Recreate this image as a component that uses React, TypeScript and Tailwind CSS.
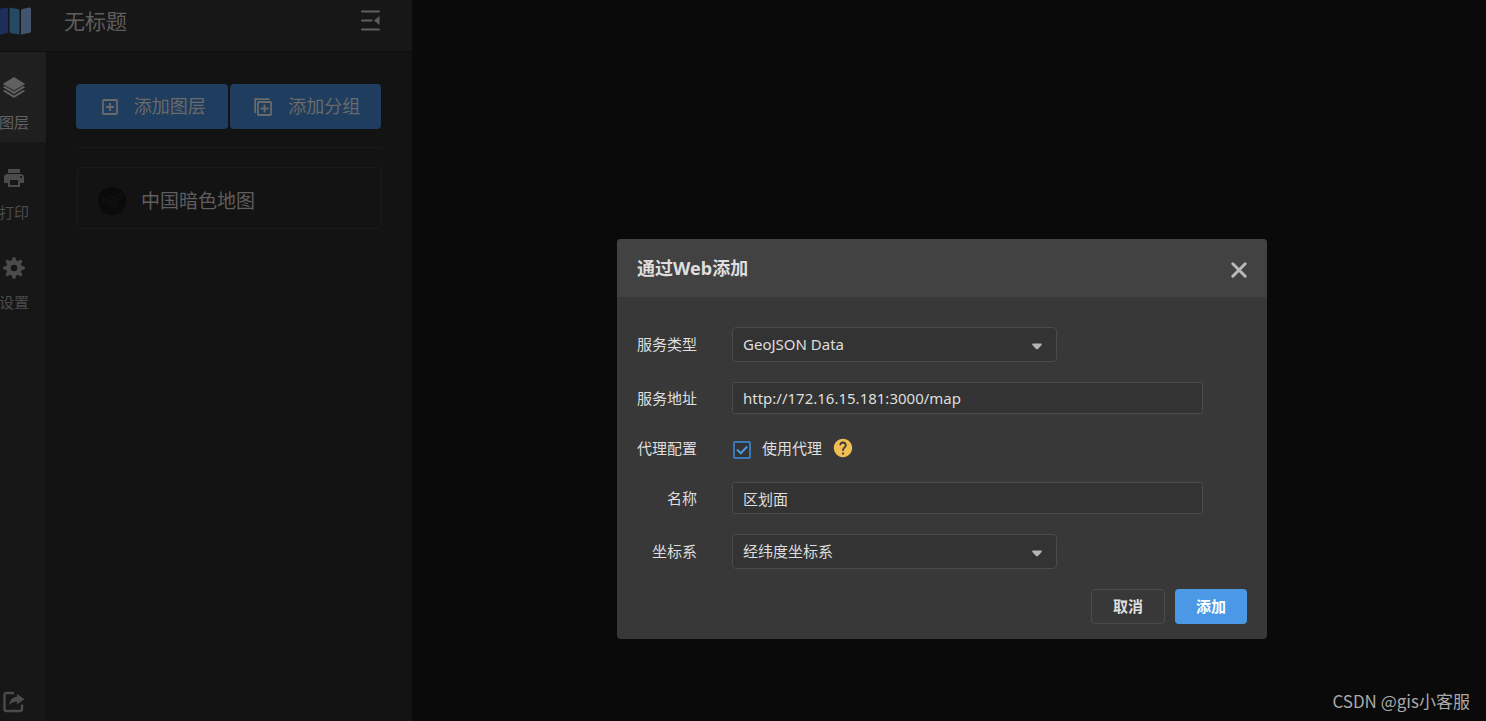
import { useState } from "react";
import type { ReactNode } from "react";
import { clsx } from "clsx";
import { MdHelp, MdPrint } from "react-icons/md";

interface RailItemProps {
    label: string;
    icon: ReactNode;
    active?: boolean;
    onClick: () => void;
}

interface FieldProps {
    id: string;
    label: string;
    children: ReactNode;
}

interface SelectBoxProps {
    id: string;
    value: string;
    options: string[];
    onChange: (value: string) => void;
}

interface TextBoxProps {
    id: string;
    value: string;
    onChange: (value: string) => void;
}

const LogoIcon = () => (
    <svg width="42" height="28" viewBox="0 0 42 28" aria-hidden="true">
        <path d="M0 3Q0 1.5 2 1L7 0V26.5L0 27.5Z" fill="#1a2a48" />
        <path d="M8.5 2L16 0.5Q18 0 18 2V24.5Q18 26 16 26.5L8.5 28Z" fill="#1c2e59" />
        <path d="M19.5 0.5L28 2Q29.5 2.3 29.5 4V27.5L21 26.2Q19.5 26 19.5 24.5Z" fill="#234a62" />
        <path d="M31 4Q31 2.3 32.5 2L39 0.5Q41 0 41 2V24Q41 25.6 39.5 26L31 27.5Z" fill="#43546f" />
    </svg>
);

const FoldIcon = () => (
    <svg width="20" height="22" viewBox="0 0 20 22" aria-hidden="true">
        <path d="M2 1.5H19M2 10.5H11.5M2 19.5H19" stroke="currentColor" strokeWidth="2" strokeLinecap="round" fill="none" />
        <path d="M14 10.5L19.5 6V15Z" fill="currentColor" />
    </svg>
);

const LayersIcon = () => (
    <svg width="24" height="24" viewBox="0 0 24 24" fill="currentColor" aria-hidden="true">
        <path d="M12 1L23.2 8L12 14.4L0.8 8Z" />
        <path d="M0.8 11.2L2.8 10.1L12 15.6L21.2 10.1L23.2 11.2L12 18Z" />
        <path d="M0.8 15L2.8 13.9L12 19.4L21.2 13.9L23.2 15L12 22Z" />
    </svg>
);

const GearIcon = () => (
    <svg width="24" height="24" viewBox="0 0 24 24" aria-hidden="true">
        <circle cx="12" cy="12" r="5.6" fill="none" stroke="currentColor" strokeWidth="4.6" />
        <g fill="currentColor">
            <path d="M10.7 1.2H13.3L14.4 5.5H9.6ZM10.7 22.8H13.3L14.4 18.5H9.6Z" />
            <path d="M1.2 10.7V13.3L5.5 14.4V9.6ZM22.8 10.7V13.3L18.5 14.4V9.6Z" />
            <path d="M3.4 5.2L5.2 3.4L9 5.7L5.7 9ZM20.6 18.8L18.8 20.6L15 18.3L18.3 15Z" />
            <path d="M18.8 3.4L20.6 5.2L18.3 9L15 5.7ZM5.2 20.6L3.4 18.8L5.7 15L9 18.3Z" />
        </g>
    </svg>
);

const ShareIcon = () => (
    <svg width="22" height="22" viewBox="0 0 22 22" aria-hidden="true">
        <path d="M11 2H3.5Q1.5 2 1.5 4V18Q1.5 20 3.5 20H17Q19 20 19 18V13.5" fill="none" stroke="currentColor" strokeWidth="2.4" />
        <path d="M14 3L21.5 8.2L14 13.5V10.8Q9.5 10.4 6.2 14Q7 6.4 14 5.8Z" fill="currentColor" />
    </svg>
);

const AddLayerIcon = () => (
    <svg width="16" height="16" viewBox="0 0 16 16" fill="none" stroke="currentColor" strokeWidth="1.8" aria-hidden="true">
        <rect x="1" y="1" width="14" height="14" rx="0.8" />
        <path d="M8 4V12M4 8H12" />
    </svg>
);

const AddGroupIcon = () => (
    <svg width="18" height="18" viewBox="0 0 18 18" fill="none" stroke="currentColor" strokeWidth="1.8" aria-hidden="true">
        <path d="M1.2 15V1.2H15.5" />
        <rect x="4" y="4" width="13" height="13" rx="0.8" />
        <path d="M10.5 6.5V14.5M6.5 10.5H14.5" />
    </svg>
);

const CloseIcon = () => (
    <svg width="16" height="16" viewBox="0 0 16 16" aria-hidden="true">
        <path d="M1.8 1.8L14.2 14.2M14.2 1.8L1.8 14.2" stroke="currentColor" strokeWidth="3" strokeLinecap="round" />
    </svg>
);

const MapThumb = () => (
    <svg width="28" height="28" viewBox="0 0 28 28" aria-hidden="true">
        <circle cx="14" cy="14" r="14" fill="#0a0a0a" />
        <path d="M4 10L9 12L13 9L17 11L22 6L24 10L20 14L19 19L14 21L9 17L5 16Z" fill="#0c0c0c" stroke="#121212" />
        <path d="M9 14L13 16L18 14" fill="none" stroke="#131313" />
    </svg>
);

const RailItem = ({ label, icon, active, onClick }: RailItemProps) => (
    <button
        className={clsx(
            "flex h-[90px] w-full flex-col items-center gap-3 pt-6 text-[15px] leading-5",
            active ? "bg-[#1f1f1f] text-[#616161]" : "text-[#4b4b4b]"
        )}
        onClick={onClick}
    >
        {icon}
        <span>{label}</span>
    </button>
);

const Field = ({ id, label, children }: FieldProps) => (
    <div className="flex items-center">
        <label htmlFor={id} className="mr-[35px] w-[60px] shrink-0 whitespace-nowrap text-right">{label}</label>
        {children}
    </div>
);

const SelectBox = ({ id, value, options, onChange }: SelectBoxProps) => (
    <div className="relative w-[325px]">
        <select
            id={id}
            value={value}
            onChange={(e) => onChange(e.target.value)}
            className="h-[35px] w-full appearance-none rounded-[4px] border border-[#4b4b4b] bg-[#333333] px-2.5 outline-none"
        >
            {options.map((option) => (
                <option key={option}>{option}</option>
            ))}
        </select>
        <svg className="pointer-events-none absolute top-4 right-3.5" width="12" height="8" viewBox="0 0 12 8" aria-hidden="true">
            <path d="M1.8 0.5H10.2Q11.4 0.9 10.6 1.9L7 5.9Q6 6.7 5 5.9L1.4 1.9Q0.6 0.9 1.8 0.5Z" fill="#b4b4b4" />
        </svg>
    </div>
);

const TextBox = ({ id, value, onChange }: TextBoxProps) => (
    <input
        id={id}
        type="text"
        value={value}
        onChange={(e) => onChange(e.target.value)}
        className="h-8 w-[471px] rounded-[2px] border border-[#4b4b4b] bg-[#333333] px-2.5 outline-none"
    />
);

const AddFromWebDialog = () => {
    const [serviceType, setServiceType] = useState("GeoJSON Data");
    const [url, setUrl] = useState("http://172.16.15.181:3000/map");
    const [useProxy, setUseProxy] = useState(true);
    const [name, setName] = useState("区划面");
    const [crs, setCrs] = useState("经纬度坐标系");

    return (
        <div role="dialog" aria-labelledby="dialog-title" className="w-[650px] overflow-hidden rounded-[4px] bg-[#383838] text-[15px] text-[#dedede]">
            <div className="flex h-[58px] items-center justify-between bg-[#424242] px-5">
                <h2 id="dialog-title" className="text-[18px] font-bold">通过Web添加</h2>
                <button aria-label="关闭" className="mt-1 text-[#b9b9b9]">
                    <CloseIcon />
                </button>
            </div>

            <form className="flex flex-col gap-5 px-5 pt-[30px] pb-[15px]" onSubmit={(e) => e.preventDefault()}>
                <Field id="service-type" label="服务类型">
                    <SelectBox id="service-type" value={serviceType} options={["GeoJSON Data", "WMS", "WMTS"]} onChange={setServiceType} />
                </Field>
                <Field id="service-url" label="服务地址">
                    <TextBox id="service-url" value={url} onChange={setUrl} />
                </Field>
                <Field id="use-proxy" label="代理配置">
                    <div className="flex h-7 items-center">
                        <span className="relative mt-1 ml-px flex">
                            <input
                                id="use-proxy"
                                type="checkbox"
                                checked={useProxy}
                                onChange={(e) => setUseProxy(e.target.checked)}
                                className="size-[18px] appearance-none rounded-[2px] border-2 border-[#3b78b8] bg-[#333333]"
                            />
                            {useProxy && (
                                <svg className="pointer-events-none absolute inset-0" width="18" height="18" viewBox="0 0 18 18" aria-hidden="true">
                                    <path d="M4 8.5L7.8 12.3L14.2 5.5" fill="none" stroke="#4a96e2" strokeWidth="2" />
                                </svg>
                            )}
                        </span>
                        <label htmlFor="use-proxy" className="ml-[11px]">使用代理</label>
                        <MdHelp className="mb-px ml-2.5 size-[22px] text-[#efbd51]" />
                    </div>
                </Field>
                <Field id="layer-name" label="名称">
                    <TextBox id="layer-name" value={name} onChange={setName} />
                </Field>
                <Field id="crs" label="坐标系">
                    <SelectBox id="crs" value={crs} options={["经纬度坐标系", "墨卡托坐标系"]} onChange={setCrs} />
                </Field>
                <div className="flex justify-end gap-2.5 font-bold">
                    <button type="button" className="h-[35px] w-[74px] rounded-[4px] border border-[#4b4b4b]">取消</button>
                    <button type="submit" className="h-[35px] w-[72px] rounded-[4px] bg-[#4b98e6] text-white">添加</button>
                </div>
            </form>
        </div>
    );
};

export default function App() {
    const [tab, setTab] = useState("layers");

    return (
        <div className="relative flex h-screen overflow-hidden bg-[#0a0a0a] font-['Noto_Sans','Noto_Sans_CJK_SC',sans-serif]">
            <aside className="flex w-[412px] shrink-0 flex-col bg-[#131313]">
                <header className="flex h-[52px] items-center border-b border-[#0d0d0d] bg-[#171717] pr-8 pb-2.5 text-[#5e5e5e]">
                    <div className="-ml-2.5 w-[74px]">
                        <LogoIcon />
                    </div>
                    <h1 className="grow text-[21px] leading-7">无标题</h1>
                    <button aria-label="收起">
                        <FoldIcon />
                    </button>
                </header>

                <div className="flex grow">
                    <nav className="-ml-[18px] flex w-[65px] flex-col border-r border-[#0f0f0f] bg-[#171717]">
                        <RailItem label="图层" icon={<LayersIcon />} active={tab === "layers"} onClick={() => setTab("layers")} />
                        <RailItem label="打印" icon={<MdPrint size={24} />} active={tab === "print"} onClick={() => setTab("print")} />
                        <RailItem label="设置" icon={<GearIcon />} active={tab === "settings"} onClick={() => setTab("settings")} />
                        <button aria-label="分享" className="mt-auto mb-2 flex justify-center text-[#4b4b4b]">
                            <ShareIcon />
                        </button>
                    </nav>

                    <div className="grow px-[30px] pt-8 text-[#6a6a6a]">
                        <div className="-ml-px mr-px flex gap-0.5 text-[18px]">
                            <button className="flex h-[45px] flex-1 items-center justify-center gap-4 rounded-[4px] bg-[#1f3d5e] pl-1">
                                <AddLayerIcon />
                                添加图层
                            </button>
                            <button className="flex h-[45px] flex-1 items-center justify-center gap-4 rounded-[4px] bg-[#1f3d5e] pl-1">
                                <AddGroupIcon />
                                添加分组
                            </button>
                        </div>
                        <hr className="mt-[18px] border-[#1a1a1a]" />
                        <ul className="mt-[19px]">
                            <li className="flex h-[62px] items-center gap-[15px] rounded-[4px] border border-[#1a1a1a] px-5 pt-1.5 text-[19px] text-[#5e5e5e]">
                                <MapThumb />
                                中国暗色地图
                            </li>
                        </ul>
                    </div>
                </div>
            </aside>

            <main className="flex grow items-end justify-end px-4 pb-2 text-[17px] text-[#a9a9a9] font-['Noto_Sans_CJK_SC',sans-serif]">
                <p>CSDN @gis小客服</p>
            </main>

            <div className="pointer-events-none absolute inset-0 flex items-center justify-center pt-[157px] pl-[398px]">
                <div className="pointer-events-auto">
                    <AddFromWebDialog />
                </div>
            </div>
        </div>
    );
}
